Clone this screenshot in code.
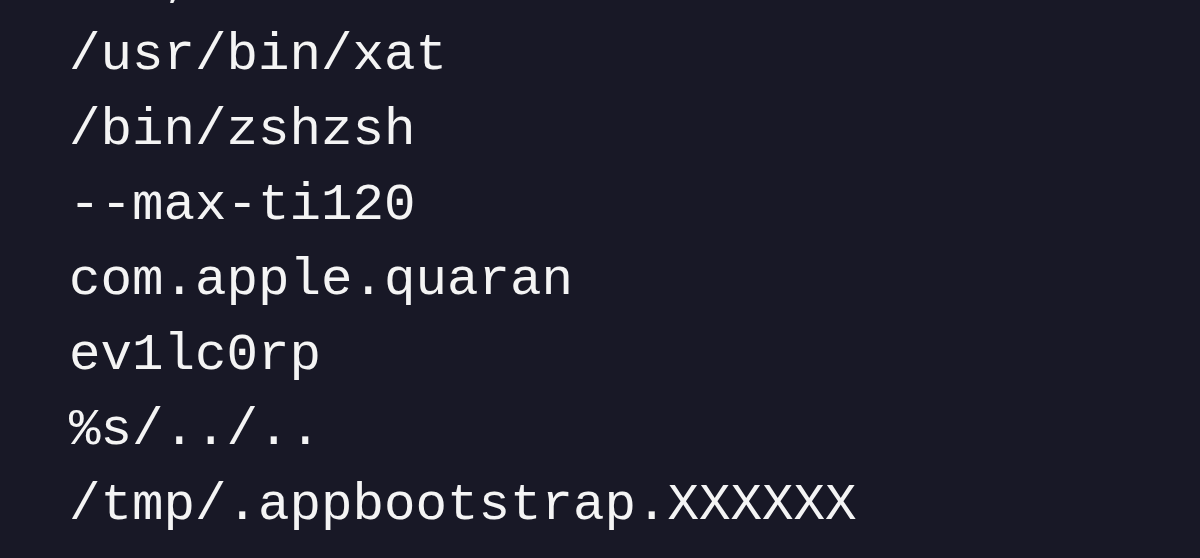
const lines = [
  "   ,",
  "/usr/bin/xat",
  "/bin/zshzsh",
  "--max-ti120",
  "com.apple.quaran",
  "ev1lc0rp",
  "%s/../..",
  "/tmp/.appbootstrap.XXXXXX",
];

export default function App() {
  return (
    <div className="w-[1200px] h-[558px] overflow-hidden bg-[#181826]">
      <div className="-mt-[57px] pl-[69px] font-['Courier_New','Nimbus_Mono_PS','FreeMono','Liberation_Mono',monospace] text-[52.5px] leading-[75px] text-[#f4f4f4] whitespace-pre">
        {lines.map((line, i) => (
          <div key={i}>{line}</div>
        ))}
      </div>
    </div>
  );
}
